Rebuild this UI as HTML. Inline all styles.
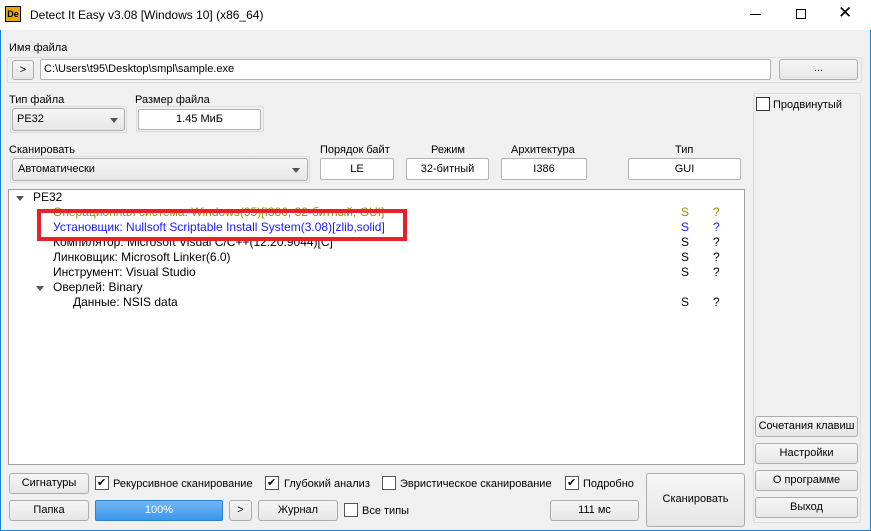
<!DOCTYPE html><html><head><meta charset="utf-8"><style>
*{box-sizing:border-box;margin:0;padding:0}
body{width:871px;height:531px;overflow:hidden;background:#f0f0f0;font-family:"Liberation Sans","DejaVu Sans",sans-serif;font-size:11px;color:#000;position:relative}
.a{position:absolute;white-space:nowrap}
.tb{left:0;top:0;width:871px;height:30px;background:#fff}
.btn{position:absolute;background:linear-gradient(#f6f6f6,#e6e6e6);border:1px solid #adadad;border-radius:3px;text-align:center;font-size:11px;white-space:nowrap}
.fld{position:absolute;background:#fff;border:1px solid #b4b4b4;border-radius:2px;text-align:center}
.grp{position:absolute;border:1px solid #dcdcdc;border-radius:2px}
.cb{position:absolute;width:14px;height:14px;background:#fff;border:1px solid #555}
.cb.k::after{content:"✔";position:absolute;left:1px;top:-1px;font-size:11px}
.r{position:absolute;height:15px;line-height:15px;white-space:nowrap;font-size:12px}
.blk{color:#000}.ol{color:#a08a00}.bl{color:#1a1aff}
.tri{position:absolute;width:0;height:0;border-left:4px solid transparent;border-right:4px solid transparent;border-top:5px solid #555}
</style></head><body>
<div style="position:absolute;left:0;top:0;width:871px;height:531px;border:1px solid #1883d7;border-top:none"></div>
<div class="a tb"></div>
<div class="a" style="left:5px;top:6px;width:16px;height:16px;background:#e8a800;border:1px solid #000;font:bold 9px 'Liberation Sans';color:#000;line-height:14px;text-align:center">De</div>
<div class="a" style="left:30px;top:8px;font-size:12px">Detect It Easy v3.08 [Windows 10] (x86_64)</div>
<div class="a" style="left:750px;top:14px;width:11px;height:1px;background:#000"></div>
<div class="a" style="left:796px;top:9px;width:10px;height:10px;border:1px solid #000"></div>
<div class="a" style="left:838px;top:3px;font-size:17px">✕</div>

<div class="a" style="left:9px;top:42px">Имя файла</div>
<div class="grp" style="left:7px;top:57px;width:855px;height:26px"></div>
<div class="btn" style="left:12px;top:60px;width:22px;height:20px;line-height:18px">&gt;</div>
<div class="fld" style="left:40px;top:59px;width:731px;height:21px;text-align:left;padding-left:3px;line-height:19px">C:\Users\t95\Desktop\smpl\sample.exe</div>
<div class="btn" style="left:779px;top:59px;width:79px;height:21px;line-height:17px">...</div>

<div class="a" style="left:9px;top:94px">Тип файла</div>
<div class="a" style="left:135px;top:94px">Размер файла</div>
<div class="grp" style="left:10px;top:106px;width:117px;height:27px"></div>
<div class="btn" style="left:12px;top:108px;width:113px;height:23px;text-align:left;padding-left:4px;line-height:21px">PE32</div><div class="tri" style="left:110px;top:118px"></div>
<div class="grp" style="left:136px;top:106px;width:128px;height:26px"></div>
<div class="fld" style="left:138px;top:109px;width:123px;height:21px;line-height:19px">1.45 МиБ</div>

<div class="a" style="left:9px;top:144px">Сканировать</div>
<div class="grp" style="left:10px;top:156px;width:300px;height:27px"></div>
<div class="btn" style="left:12px;top:158px;width:296px;height:23px;text-align:left;padding-left:5px;line-height:21px">Автоматически</div><div class="tri" style="left:292px;top:168px"></div>
<div class="a" style="left:320px;top:144px">Порядок байт</div>
<div class="a" style="left:431px;top:144px">Режим</div>
<div class="a" style="left:511px;top:144px">Архитектура</div>
<div class="a" style="left:675px;top:144px">Тип</div>
<div class="fld" style="left:320px;top:158px;width:74px;height:22px;line-height:20px">LE</div>
<div class="fld" style="left:406px;top:158px;width:83px;height:22px;line-height:20px">32-битный</div>
<div class="fld" style="left:501px;top:158px;width:86px;height:22px;line-height:20px">I386</div>
<div class="fld" style="left:628px;top:158px;width:113px;height:22px;line-height:20px">GUI</div>

<div class="grp" style="left:753px;top:93px;width:108px;height:430px"></div>
<div class="cb" style="left:756px;top:97px;border-color:#333"></div>
<div class="a" style="left:773px;top:99px">Продвинутый</div>

<div class="a" style="left:8px;top:189px;width:737px;height:276px;background:#fff;border:1px solid #a0a0a0"></div>
<div class="tri" style="left:16px;top:196px"></div>
<div class="r blk" style="left:33px;top:190px">PE32</div>
<div class="r ol" style="left:53px;top:205px">Операционная система: Windows(95)[I386, 32-битный, GUI]</div>
<div class="r bl" style="left:53px;top:220px">Установщик: Nullsoft Scriptable Install System(3.08)[zlib,solid]</div>
<div class="r" style="left:53px;top:235px">Компилятор: Microsoft Visual C/C++(12.20.9044)[C]</div>
<div class="r" style="left:53px;top:250px">Линковщик: Microsoft Linker(6.0)</div>
<div class="r" style="left:53px;top:265px">Инструмент: Visual Studio</div>
<div class="tri" style="left:36px;top:286px"></div>
<div class="r" style="left:53px;top:280px">Оверлей: Binary</div>
<div class="r" style="left:73px;top:295px">Данные: NSIS data</div>
<div class="r ol" style="left:681px;top:205px">S</div><div class="r ol" style="left:713px;top:205px">?</div>
<div class="r bl" style="left:681px;top:220px">S</div><div class="r bl" style="left:713px;top:220px">?</div>
<div class="r" style="left:681px;top:235px">S</div><div class="r" style="left:713px;top:235px">?</div>
<div class="r" style="left:681px;top:250px">S</div><div class="r" style="left:713px;top:250px">?</div>
<div class="r" style="left:681px;top:265px">S</div><div class="r" style="left:713px;top:265px">?</div>
<div class="r" style="left:681px;top:295px">S</div><div class="r" style="left:713px;top:295px">?</div>
<div class="a" style="left:37px;top:209px;width:370px;height:32px;border:4px solid #e8202a"></div>

<div class="btn" style="left:9px;top:473px;width:80px;height:21px;line-height:19px">Сигнатуры</div>
<div class="cb k" style="left:95px;top:476px"></div><div class="a" style="left:113px;top:478px">Рекурсивное сканирование</div>
<div class="cb k" style="left:265px;top:476px"></div><div class="a" style="left:284px;top:478px">Глубокий анализ</div>
<div class="cb" style="left:382px;top:476px"></div><div class="a" style="left:400px;top:478px">Эвристическое сканирование</div>
<div class="cb k" style="left:565px;top:476px"></div><div class="a" style="left:583px;top:478px">Подробно</div>
<div class="btn" style="left:646px;top:473px;width:99px;height:54px;line-height:50px">Сканировать</div>
<div class="btn" style="left:9px;top:500px;width:80px;height:21px;line-height:19px">Папка</div>
<div class="a" style="left:95px;top:500px;width:128px;height:21px;background:linear-gradient(#6fb6f5,#3c97ea);border:1px solid #2a7fcf;border-radius:2px;color:#fff;text-align:center;line-height:19px">100%</div>
<div class="btn" style="left:229px;top:500px;width:23px;height:21px;line-height:19px">&gt;</div>
<div class="btn" style="left:258px;top:500px;width:80px;height:21px;line-height:19px">Журнал</div>
<div class="cb" style="left:344px;top:503px"></div><div class="a" style="left:362px;top:505px">Все типы</div>
<div class="btn" style="left:550px;top:500px;width:89px;height:21px;line-height:19px">111 мс</div>

<div class="btn" style="left:755px;top:416px;width:103px;height:21px;line-height:19px">Сочетания клавиш</div>
<div class="btn" style="left:755px;top:443px;width:103px;height:21px;line-height:19px">Настройки</div>
<div class="btn" style="left:755px;top:470px;width:103px;height:21px;line-height:19px">О программе</div>
<div class="btn" style="left:755px;top:497px;width:103px;height:21px;line-height:19px">Выход</div>
</body></html>
